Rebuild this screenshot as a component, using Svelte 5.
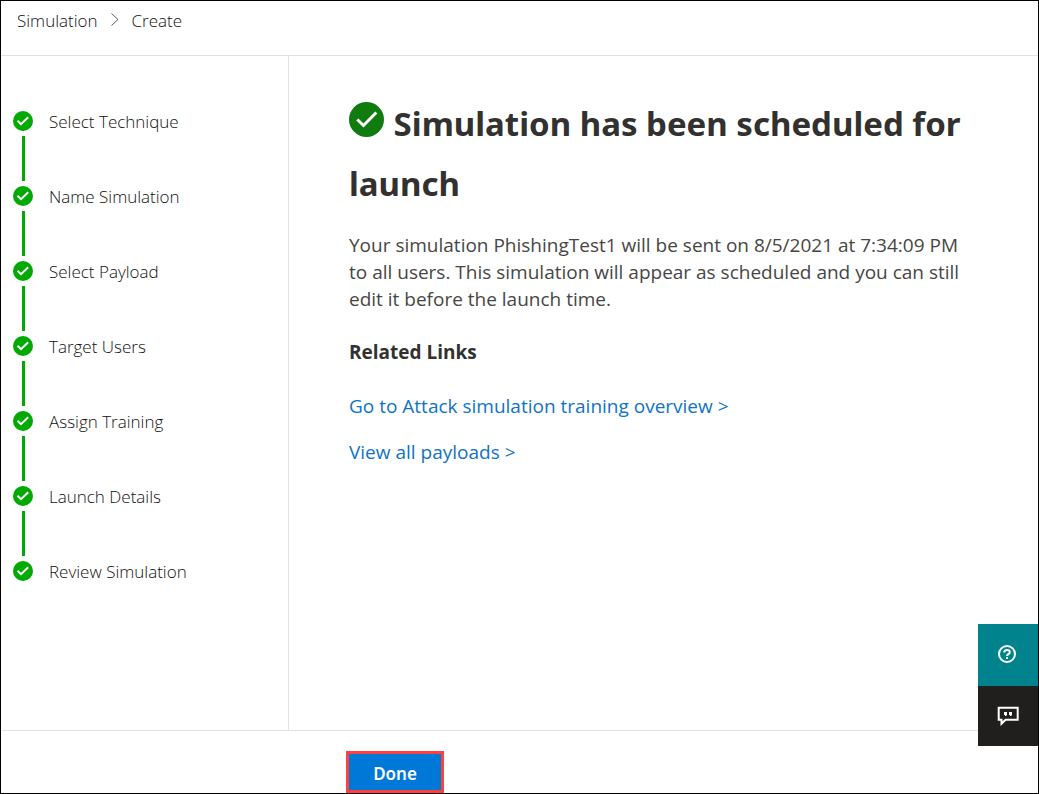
<script>
  const steps = ['Select Technique', 'Name Simulation', 'Select Payload', 'Target Users', 'Assign Training', 'Launch Details', 'Review Simulation'];
</script>

<div class="page">
  <nav class="crumbs" aria-label="Breadcrumb">
    <span>Simulation</span>
    <svg width="8" height="14" viewBox="0 0 8 14" aria-hidden="true"><path d="M.5 .5l6.500 6-6.500 6" /></svg>
    <span>Create</span>
  </nav>
  <div class="body">
    <ol class="steps">
      {#each steps as step}
        <li>
          <svg class="tick" width="20" height="20" viewBox="0 0 20 20" aria-hidden="true">
            <circle cx="10" cy="10" r="10" /><path d="M4.500 9.800l3.500 3.400 7.200-6.900" />
          </svg>
          <span>{step}</span>
        </li>
      {/each}
    </ol>
    <main>
      <h1>
        <svg class="big" width="36" height="36" viewBox="0 0 36 36" aria-hidden="true">
          <circle cx="17.500" cy="17.500" r="17.500" /><path d="M8.300 17.500l6.200 6 12.800-13" />
        </svg>
        Simulation has been scheduled for launch
      </h1>
      <p>Your simulation PhishingTest1 will be sent on 8/5/2021 at 7:34:09 PM to all users. This simulation will appear as scheduled and you can still edit it before the launch time.</p>
      <h2>Related Links</h2>
      <a href="#overview">Go to Attack simulation training overview &gt;</a>
      <a href="#payloads">View all payloads &gt;</a>
    </main>
  </div>
  <footer><button class="done">Done</button></footer>
  <div class="float">
    <button class="help" aria-label="Help">
      <svg width="20" height="20" viewBox="0 0 20 20" aria-hidden="true"><circle cx="9" cy="9" r="8" /><path d="M6.200 7.500q0-2.600 2.800-2.600t2.800 2.300q0 1.200-1.400 2Q9 10 9 11M9 12v2" /></svg>
    </button>
    <button class="feedback" aria-label="Give feedback">
      <svg width="22" height="20" viewBox="0 0 22 20" aria-hidden="true"><path d="M1.700 1.700h19v12H8.500l-4 4v-4H1.700z" /><path class="quote" d="M7 6h3v3l-1 1H8V9H7zM12 6h3v3l-1 1h-1V9h-1z" /></svg>
    </button>
  </div>
</div>

<style>
  :global(body) { font-family: "Open Sans", "Noto Sans", sans-serif; color: #323130; }
  .page { box-sizing: border-box; position: relative; min-height: 100vh; border: 1px solid #000; background: #fff; display: flex; flex-direction: column; }
  .crumbs { display: flex; align-items: center; gap: 13px; height: 55px; box-sizing: border-box; padding: 0 16px 16px; border-bottom: 1px solid #e1e1e1; color: #11100f; font-size: 17px; font-weight: 300; }
  svg path { fill: none; stroke: #fff; }
  .crumbs path { stroke: #605e5c; }
  .body { flex: 1; display: flex; }
  .steps { list-style: none; margin: 0; box-sizing: border-box; width: 288px; padding: 53px 12px 0; border-right: 1px solid #e1e1e1; color: #11100f; font-size: 17px; font-weight: 300; }
  li { position: relative; display: flex; align-items: center; gap: 16px; height: 24px; margin-bottom: 51px; }
  li:not(:last-child)::after { content: ""; position: absolute; left: 9px; top: 27px; width: 3px; height: 45px; background: #00aa00; }
  .tick circle { fill: #00aa00; }
  .tick path { stroke-width: 2; }
  main { flex: 1; padding: 38px 60px; font-size: 19px; line-height: 27px; }
  h1 { margin: 0; font: bold 33px/60px "Noto Sans", sans-serif; }
  .big { vertical-align: -2px; }
  .big circle { fill: #107c10; }
  .big path { stroke-width: 3; }
  p { margin: 18px 0 0; color: #484644; }
  h2 { margin: 26px 0 27px; font-size: 19px; line-height: 27px; }
  a { display: block; width: fit-content; margin-bottom: 19px; color: #0f73c6; text-decoration: none; }
  footer { box-sizing: border-box; height: 63px; padding: 20px 0 0 345px; border-top: 1px solid #e1e1e1; }
  button { padding: 0; border: 0; }
  .done { width: 98px; height: 42px; padding-top: 2px; background: #0078d7; border: 3px solid #fd4143; color: #fff; font: 600 17px "Noto Sans", sans-serif; }
  .float { position: absolute; right: 0; bottom: 47px; width: 60px; display: grid; }
  .float button { height: 60px; display: grid; place-items: center; }
  .float .help { height: 62px; background: #00838c; }
  .feedback { background: #201f1e; }
  .float path, .float circle { fill: none; stroke: #fff; stroke-width: 2; }
  .float .quote { fill: #fff; stroke: none; }
</style>
